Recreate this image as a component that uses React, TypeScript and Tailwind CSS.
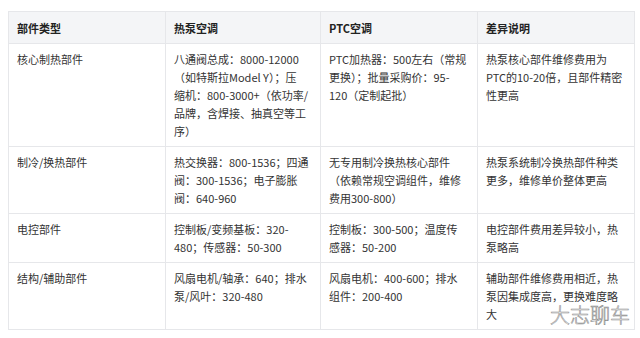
const rows: string[][][] = [
  [
    ["核心制热部件"],
    ["八通阀总成：8000-12000", "（如特斯拉Model Y）；压", "缩机：800-3000+（依功率/", "品牌，含焊接、抽真空等工", "序）"],
    ["PTC加热器：500左右（常规", "更换）；批量采购价：95-", "120（定制起批）"],
    ["热泵核心部件维修费用为", "PTC的10-20倍，且部件精密", "性更高"],
  ],
  [
    ["制冷/换热部件"],
    ["热交换器：800-1536；四通", "阀：300-1536；电子膨胀", "阀：640-960"],
    ["无专用制冷换热核心部件", "（依赖常规空调组件，维修", "费用300-800）"],
    ["热泵系统制冷换热部件种类", "更多，维修单价整体更高"],
  ],
  [
    ["电控部件"],
    ["控制板/变频基板：320-", "480；传感器：50-300"],
    ["控制板：300-500；温度传", "感器：50-200"],
    ["电控部件费用差异较小，热", "泵略高"],
  ],
  [
    ["结构/辅助部件"],
    ["风扇电机/轴承：640；排水", "泵/风叶：320-480"],
    ["风扇电机：400-600；排水", "组件：200-400"],
    ["辅助部件维修费用相近，热", "泵因集成度高，更换难度略", "大"],
  ],
];

const headers = ["部件类型", "热泵空调", "PTC空调", "差异说明"];

export default function App() {
  return (
    <div className="relative w-[640px] h-[338px] bg-white overflow-hidden font-['Noto_Sans_CJK_SC','Noto_Sans',sans-serif] text-[11px] leading-[18px] text-[#333]">
      <div className="pl-[8px] pt-[11px]">
        <table className="table-fixed border-collapse w-[626px]">
          <colgroup>
            <col className="w-[157px]" />
            <col className="w-[155px]" />
            <col className="w-[157px]" />
            <col className="w-[157px]" />
          </colgroup>
          <thead>
            <tr className="bg-[#f4f5f7]">
              {headers.map((h) => (
                <th
                  key={h}
                  className="border border-[#e6e7ea] px-[8px] py-[6.5px] text-left font-bold text-[#222]"
                >
                  {h}
                </th>
              ))}
            </tr>
          </thead>
          <tbody>
            {rows.map((row, i) => (
              <tr key={i}>
                {row.map((cell, j) => (
                  <td
                    key={j}
                    className="border border-[#e6e7ea] px-[8px] py-[6px] align-top whitespace-nowrap"
                  >
                    {cell.map((line, k) => (
                      <div key={k}>{line}</div>
                    ))}
                  </td>
                ))}
              </tr>
            ))}
          </tbody>
        </table>
      </div>

      {/* WATERMARK */}
      <div className="absolute left-[550px] top-[302px] text-[20px] leading-[26px] font-light text-white [-webkit-text-stroke:0.6px_#8f8f8f]">
        大志聊车
      </div>
    </div>
  );
}
